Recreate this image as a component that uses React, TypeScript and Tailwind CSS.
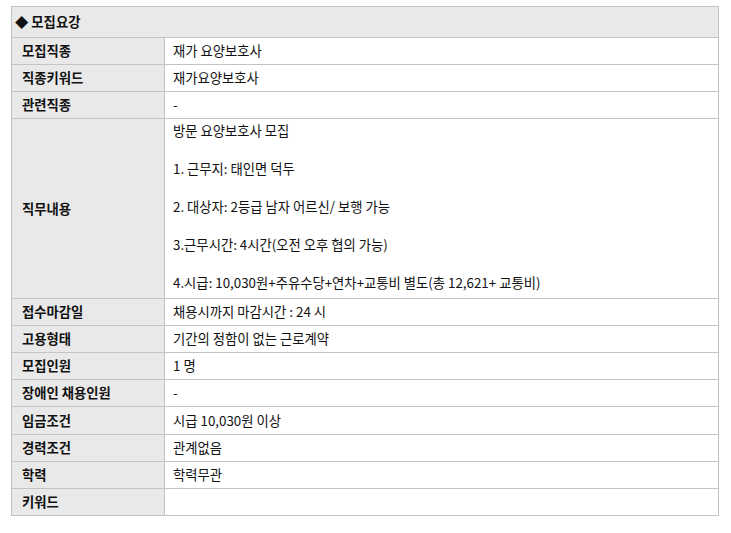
import React from "react";

type Row = { label: string; value: React.ReactNode; h?: string };

const duties = [
  "방문 요양보호사 모집",
  "",
  "1. 근무지: 태인면 덕두",
  "",
  "2. 대상자: 2등급 남자 어르신/ 보행 가능",
  "",
  "3.근무시간: 4시간(오전 오후 협의 가능)",
  "",
  "4.시급: 10,030원+주유수당+연차+교통비 별도(총 12,621+ 교통비)",
];

const rows: Row[] = [
  { label: "모집직종", value: "재가 요양보호사" },
  { label: "직종키워드", value: "재가요양보호사" },
  { label: "관련직종", value: "-" },
  {
    label: "직무내용",
    h: "h-[180px]",
    value: (
      <div className="flex flex-col self-start pt-[2px]">
        {duties.map((line, i) => (
          <div key={i} className="h-[19px] leading-[19px]">
            {line}
          </div>
        ))}
      </div>
    ),
  },
  { label: "접수마감일", value: "채용시까지 마감시간 : 24 시" },
  { label: "고용형태", value: "기간의 정함이 없는 근로계약" },
  { label: "모집인원", value: "1 명" },
  { label: "장애인 채용인원", value: "-" },
  { label: "임금조건", value: "시급 10,030원 이상", h: "h-[28px]" },
  { label: "경력조건", value: "관계없음" },
  { label: "학력", value: "학력무관" },
  { label: "키워드", value: "" },
];

export default function App() {
  return (
    <div className="min-h-[533px] bg-white pt-[6px] pl-[11px] text-[13.33px] text-[#111] [font-family:'Noto_Sans_CJK_KR','Noto_Sans',sans-serif]">
      <div className="w-[708px] border-l border-t border-[#c3c3c3]">
        {/* Title bar */}
        <div className="flex h-[31px] items-center border-r border-b border-[#c3c3c3] bg-[#e9e9e9] pl-[3px] font-bold">
          ◆ 모집요강
        </div>

        {rows.map((row) => (
          <div
            key={row.label}
            className={`grid grid-cols-[153px_554px] ${row.h ?? "h-[27px]"}`}
          >
            <div className="flex items-center border-r border-b border-[#c3c3c3] bg-[#e9e9e9] pl-[10px] font-bold">
              {row.label}
            </div>
            <div className="flex items-center border-r border-b border-[#c3c3c3] pl-[8px]">
              {row.value}
            </div>
          </div>
        ))}
      </div>
    </div>
  );
}
